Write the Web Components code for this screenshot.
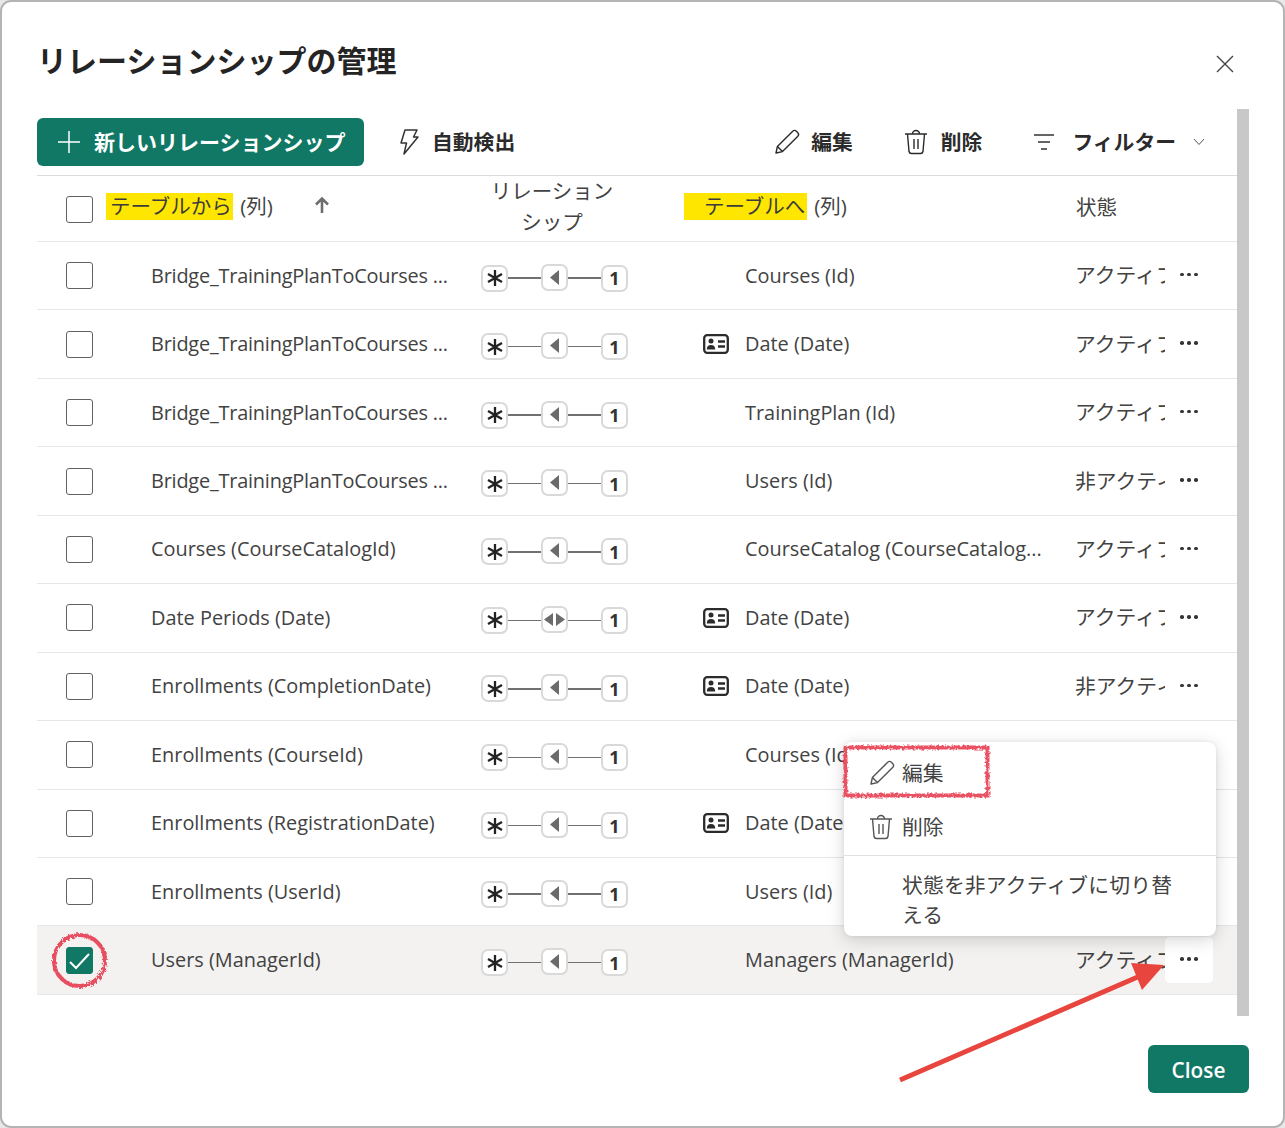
<!DOCTYPE html>
<html lang="ja">
<head>
<meta charset="utf-8">
<title>リレーションシップの管理</title>
<style>
  html, body { margin: 0; padding: 0; background: #e8e8e8; }
  body { font-family: "Open Sans", "Noto Sans CJK JP", sans-serif; color: #424242; }
</style>
</head>
<body>
<manage-dialog>
  <rel-row from="Bridge_TrainingPlanToCourses ..." tight to="Courses (Id)" status="アクティブ"></rel-row>
  <rel-row from="Bridge_TrainingPlanToCourses ..." tight to="Date (Date)" status="アクティブ" card></rel-row>
  <rel-row from="Bridge_TrainingPlanToCourses ..." tight to="TrainingPlan (Id)" status="アクティブ"></rel-row>
  <rel-row from="Bridge_TrainingPlanToCourses ..." tight to="Users (Id)" status="非アクティブ"></rel-row>
  <rel-row from="Courses (CourseCatalogId)" to="CourseCatalog (CourseCatalog..." status="アクティブ"></rel-row>
  <rel-row from="Date Periods (Date)" to="Date (Date)" status="アクティブ" card both></rel-row>
  <rel-row from="Enrollments (CompletionDate)" to="Date (Date)" status="非アクティブ" card></rel-row>
  <rel-row from="Enrollments (CourseId)" to="Courses (Id)" status="アクティブ"></rel-row>
  <rel-row from="Enrollments (RegistrationDate)" to="Date (Date)" status="アクティブ" card></rel-row>
  <rel-row from="Enrollments (UserId)" to="Users (Id)" status="アクティブ"></rel-row>
  <rel-row from="Users (ManagerId)" to="Managers (ManagerId)" status="アクティブ" selected></rel-row>
</manage-dialog>

<script>
const ICONS = {
  plus: `<svg width="24" height="24" viewBox="0 0 24 24" fill="none" stroke="currentColor" stroke-width="1.5"><path d="M12 1v22M1 12h22"/></svg>`,
  bolt: `<svg width="20" height="26" viewBox="0 0 20 26" fill="none" stroke="#333" stroke-width="1.5" stroke-linejoin="round"><path d="M6 1h12l-3.5 7H19L5 25l2.5-11H2z"/></svg>`,
  pencil: `<svg width="26" height="26" viewBox="0 0 26 26" fill="none" stroke="currentColor" stroke-width="1.4" stroke-linejoin="round"><path d="M2 24l1.4-6.5L18.5 2.4a2.9 2.9 0 0 1 4.1 0l1 1a2.9 2.9 0 0 1 0 4.1L8.500 22.600z"/><path d="M3.400 17.500l5.100 5.100"/></svg>`,
  trash: `<svg width="24" height="26" viewBox="0 0 24 26" fill="none" stroke="currentColor" stroke-width="1.4" stroke-linejoin="round"><path d="M1 5h22M3.500 5l1.500 17.500a2.500 2.500 0 0 0 2.500 2h9a2.500 2.500 0 0 0 2.500-2L20.500 5M8.500 5a3.500 3.500 0 0 1 7 0M10 10v10M14 10v10"/></svg>`,
  filter: `<svg width="22" height="18" viewBox="0 0 22 18" fill="none" stroke="#333" stroke-width="1.4"><path d="M1 2h20M5 9h12M8 16h6"/></svg>`,
  chevron: `<svg width="12" height="8" viewBox="0 0 12 8" fill="none" stroke="#555" stroke-width="1"><path d="M1 1l5 5.500L11 1"/></svg>`,
  close: `<svg width="20" height="20" viewBox="0 0 20 20" fill="none" stroke="#444" stroke-width="1.4"><path d="M2 2l16 16M18 2L2 18"/></svg>`,
  card: `<svg width="26" height="20" viewBox="0 0 26 20" fill="none" stroke="#2b2b2b" stroke-width="2.300"><rect x="1.200" y="1.200" width="23.600" height="17.600" rx="3"/><circle cx="8" cy="7" r="2.500" fill="#2b2b2b" stroke="none"/><path d="M3.800 15.500c0-3.300 1.500-4.500 4.200-4.500s4.200 1.200 4.200 4.500z" fill="#2b2b2b" stroke="none"/><path d="M15 7.500h7M15 12.500h7"/></svg>`,
  up: `<svg width="16" height="18" viewBox="0 0 16 18" fill="none" stroke="#6e6e6e" stroke-width="2.600"><path d="M8 17V3M2 8.500L8 2.500l6 6"/></svg>`
};

class CheckBox extends HTMLElement {
  constructor() {
    super();
    this.attachShadow({ mode: "open" });
  }
  connectedCallback() {
    const on = this.hasAttribute("checked");
    this.shadowRoot.innerHTML = `
      <style>
        :host { display: block; width: 27px; height: 27px; box-sizing: border-box; border-radius: 3px;
                border: 1px solid ${on ? "#117865" : "#616161"}; background: ${on ? "#117865" : "#fff"}; }
        svg { display: block; }
      </style>
      ${on ? `<svg width="25" height="25" viewBox="0 0 25 25" fill="none" stroke="#fff" stroke-width="2"><path d="M3 14l6 6L22 6"/></svg>` : ""}`;
  }
}
customElements.define("check-box", CheckBox);

class RelGlyph extends HTMLElement {
  constructor() {
    super();
    this.attachShadow({ mode: "open" });
  }
  connectedCallback() {
    const both = this.hasAttribute("both");
    this.shadowRoot.innerHTML = `
      <style>
        :host { display: flex; align-items: center; width: 147px; height: 27px; margin-top: 5px; }
        .box { box-sizing: border-box; width: 27px; height: 27px; flex: none; background: #fff; border: 2px solid #d9d9d9;
               border-radius: 7px; display: flex; align-items: center; justify-content: center; }
        .mid { margin-top: -2px; }
        .line { flex: 1; height: 1.500px; background: #707070; }
        .one { font: 700 18px "Open Sans", sans-serif; color: #333; line-height: 1; }
      </style>
      <span class="box"><svg width="18" height="18" viewBox="0 0 18 18" stroke="#222" stroke-width="2.300"><path d="M9 1v16M2 5l14 8M16 5L2 13"/></svg></span>
      <span class="line"></span>
      <span class="box mid"><svg width="${both ? 23 : 12}" height="15" viewBox="0 0 ${both ? 23 : 12} 15" fill="#6b6b6b">${both ? `<path d="M10 1v13L1 7.500zM13 1v13l9-6.500z"/>` : `<path d="M10 0v15L1 7.500z"/>`}</svg></span>
      <span class="line"></span>
      <span class="box"><span class="one">1</span></span>`;
  }
}
customElements.define("rel-glyph", RelGlyph);

class RelRow extends HTMLElement {
  constructor() {
    super();
    this.attachShadow({ mode: "open" });
  }
  connectedCallback() {
    const sel = this.hasAttribute("selected");
    this.shadowRoot.innerHTML = `
      <style>
        :host { display: grid; grid-template-columns: 114px 330px 222px 41px 331px 90px 48px 24px; align-items: center;
                box-sizing: border-box; height: 68.450px; border-bottom: 1px solid #e6e6e6; font-size: 19.900px; color: #424242;
                background: ${sel ? "#f3f2f1" : "transparent"}; }
        .chk { padding-left: 29px; }
        .status { overflow: hidden; white-space: nowrap; font-size: 20.800px; margin-bottom: 3px; }
        .more { height: 46px; border-radius: 5px; display: flex; align-items: center; justify-content: center;
                background: ${sel ? "#fff" : "transparent"}; }
        .dots { display: flex; gap: 3.500px; margin-top: -2px; }
        .dots i { width: 3.500px; height: 3.500px; border-radius: 50%; background: #333; }
        .ico { display: flex; }
        .txt { white-space: nowrap; margin-bottom: 1px; }
        .tight { letter-spacing: -0.200px; }
        .to { margin-left: 1px; }
      </style>
      <div class="chk"><check-box ${sel ? "checked" : ""}></check-box></div>
      <div class="txt ${this.hasAttribute("tight") ? "tight" : ""}">${this.getAttribute("from")}</div>
      <div><rel-glyph ${this.hasAttribute("both") ? "both" : ""}></rel-glyph></div>
      <div class="ico">${this.hasAttribute("card") ? ICONS.card : ""}</div>
      <div class="txt to">${this.getAttribute("to")}</div>
      <div class="status">${this.getAttribute("status")}</div>
      <div class="more"><span class="dots"><i></i><i></i><i></i></span></div>
      <div></div>`;
  }
}
customElements.define("rel-row", RelRow);

class ToolButton extends HTMLElement {
  constructor() {
    super();
    this.attachShadow({ mode: "open" });
  }
  connectedCallback() {
    this.shadowRoot.innerHTML = `
      <style>
        :host { display: inline-flex; align-items: center; font-size: 20.800px; font-weight: 700; color: #2b2b2b; white-space: nowrap; }
        :host([primary]) { height: 48px; width: 327px; box-sizing: border-box; padding-left: 20px; gap: 13px; background: #117865;
                           color: #fff; border-radius: 6px; font-size: 21px; }
        ::slotted(svg) { flex: none; }
        ::slotted(span) { margin-top: -2px; }
      </style>
      <slot></slot>`;
  }
}
customElements.define("tool-button", ToolButton);

class RelMenu extends HTMLElement {
  constructor() {
    super();
    this.attachShadow({ mode: "open" });
  }
  connectedCallback() {
    this.shadowRoot.innerHTML = `
      <style>
        :host { position: absolute; left: 842px; top: 740px; width: 372px; box-sizing: border-box; background: #fff; border-radius: 8px;
                box-shadow: 0 4px 18px rgba(0,0,0,.16), 0 0 4px rgba(0,0,0,.08); font-size: 20.800px; color: #424242; }
        .item { display: flex; align-items: center; gap: 7px; height: 54px; padding-left: 25px; }
        .item svg { flex: none; color: #555; }
        .item span { margin-top: -2px; }
        .trash { gap: 9px; }
        hr { margin: 0; border: 0; border-top: 1px solid #e0e0e0; }
        .wrap { padding: 14px 40px 6px 58px; line-height: 30px; letter-spacing: .16px; }
      </style>
      <div class="item" style="margin-top:4px">${ICONS.pencil}<span>編集</span></div>
      <div class="item trash">${ICONS.trash}<span>削除</span></div>
      <hr style="margin-top:1px">
      <div class="wrap">状態を非アクティブに切り替える</div>`;
  }
}
customElements.define("rel-menu", RelMenu);

class ManageDialog extends HTMLElement {
  constructor() {
    super();
    this.attachShadow({ mode: "open" });
  }
  connectedCallback() {
    this.shadowRoot.innerHTML = `
      <style>
        :host { display: flex; flex-direction: column; position: relative; box-sizing: border-box; width: 1285px; height: 1128px;
                background: #fff; border: 2px solid #b4b4b4; border-radius: 11px; padding: 0 34px 0 35px; overflow: hidden; }
        .title { display: flex; justify-content: space-between; align-items: center; height: 107px; flex: none; }
        h1 { margin: 6px 0 0 0; font-size: 30px; font-weight: 700; color: #242424; }
        .x { display: flex; margin: 17px 14px 0 0; }
        .panel { display: flex; height: 907px; flex: none; }
        .main { width: 1200px; flex: none; }
        .bar { width: 12px; background: #c8c8c8; flex: none; }
        .tools { display: flex; align-items: center; height: 67px; border-bottom: 1px solid #dcdcdc; box-sizing: border-box; }
        .auto { margin-left: 35px; gap: 13px; }
        .spacer { flex: 1; }
        .gap-a { gap: 11px; }
        .gap-b { gap: 13px; margin-left: 51px; }
        .gap-c { gap: 17px; margin-left: 51px; margin-right: 32px; }
        .head { display: grid; grid-template-columns: 69px 208px 370px 392px 1fr; align-items: center; height: 66px; box-sizing: border-box;
                border-bottom: 1px solid #e6e6e6; font-size: 20.500px; color: #424242; }
        .head .c { padding-left: 29px; }
        .mark { background: #ffe600; height: 27px; line-height: 27px; display: inline-block; color: #3c3c3c; }
        .fromh { display: flex; align-items: center; position: relative; margin-bottom: 8px; }
        .up { position: absolute; left: 208px; top: 50%; transform: translateY(-50%); display: flex; }
        .paren { margin-left: 2px; }
        .relh { text-align: center; line-height: 31px; width: 126px; margin: 0 0 4px 175px; }
        .toh { display: flex; align-items: center; margin-bottom: 8px; }
        .state { margin-bottom: 6px; }
        .foot { display: flex; justify-content: flex-end; flex: none; margin-top: 29px; }
        .close { width: 101px; height: 48px; background: #117865; color: #fff; border-radius: 6px; font-size: 20.800px; font-weight: 600;
                 display: flex; align-items: center; justify-content: center; padding-top: 1px; box-sizing: border-box; }
        .ink { position: absolute; left: -2px; top: -2px; width: 1285px; height: 1128px; pointer-events: none; }
      </style>
      <div class="title"><h1>リレーションシップの管理</h1><span class="x">${ICONS.close}</span></div>
      <div class="panel">
        <div class="main">
          <div class="tools">
            <tool-button primary>${ICONS.plus}<span>新しいリレーションシップ</span></tool-button>
            <tool-button class="auto">${ICONS.bolt}<span>自動検出</span></tool-button>
            <span class="spacer"></span>
            <tool-button class="gap-a">${ICONS.pencil}<span>編集</span></tool-button>
            <tool-button class="gap-b">${ICONS.trash}<span>削除</span></tool-button>
            <tool-button class="gap-c">${ICONS.filter}<span>フィルター</span>${ICONS.chevron}</tool-button>
          </div>
          <div class="head">
            <div class="c"><check-box></check-box></div>
            <div class="fromh"><span><span class="mark" style="padding-left:4px;width:123px">テーブルから</span><span class="paren"> (列)</span></span><span class="up">${ICONS.up}</span></div>
            <div class="relh">リレーション シップ</div>
            <div class="toh"><span><span class="mark" style="padding-left:20px;width:103px">テーブルへ</span><span class="paren"> (列)</span></span></div>
            <div class="state">状態</div>
          </div>
          <slot></slot>
        </div>
        <div class="bar"></div>
      </div>
      <div class="foot"><div class="close">Close</div></div>
      <rel-menu></rel-menu>
      <svg class="ink" viewBox="0 0 1285 1128" fill="none">
        <defs>
          <filter id="rough" x="-10%" y="-10%" width="120%" height="120%">
            <feTurbulence type="fractalNoise" baseFrequency="0.4" numOctaves="2" seed="4"/>
            <feDisplacementMap in="SourceGraphic" scale="4.500"/>
            <feGaussianBlur stdDeviation="0.4"/>
          </filter>
        </defs>
        <g stroke="#e5283c" stroke-width="4" filter="url(#rough)" opacity=".8">
          <rect x="845.500" y="747.500" width="142" height="48"/>
          <circle cx="79.500" cy="960.500" r="25.500"/>
        </g>
        <path d="M900 1080L1140 976" stroke="#e8453f" stroke-width="5"/>
        <path d="M1164 965L1131 963L1142 990z" fill="#e8453f"/>
      </svg>`;
  }
}
customElements.define("manage-dialog", ManageDialog);
</script>
</body>
</html>
